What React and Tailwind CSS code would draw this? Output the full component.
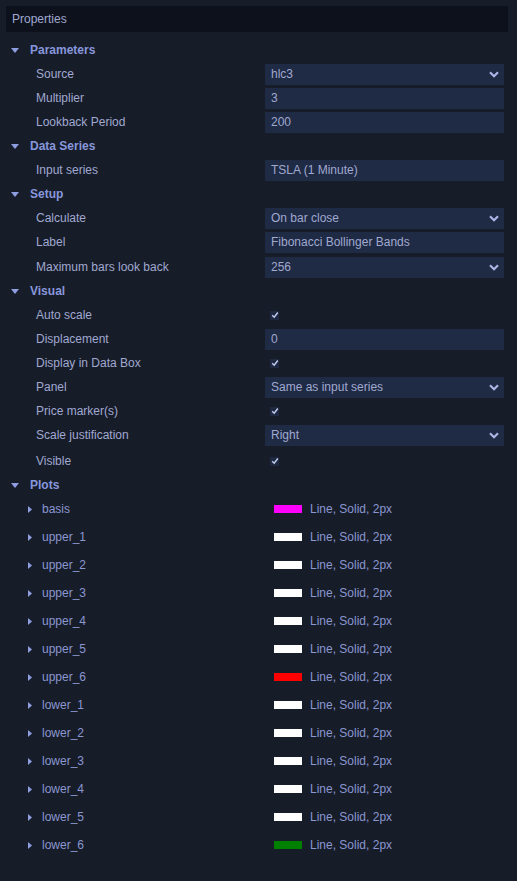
import React from "react";

const Chevron = () => (
  <svg width="10" height="7" viewBox="0 0 10 7" className="shrink-0">
    <path d="M1 1.2 L5 5.2 L9 1.2" fill="none" stroke="#a9b6e6" strokeWidth="2.2" />
  </svg>
);

const Check = () => (
  <div className="ml-[5px] flex h-[9px] w-[9px] items-center justify-center bg-[#1e2840]">
    <svg width="8" height="8" viewBox="0 0 8 8">
      <path d="M1.2 4.2 L3.2 6.2 L6.8 1.5" fill="none" stroke="#c3cdf0" strokeWidth="1.4" />
    </svg>
  </div>
);

const Header = ({ title }) => (
  <div className="flex h-[24px] items-center">
    <svg width="8" height="5" viewBox="0 0 8 5" className="ml-[5px] mr-[11px]">
      <path d="M0 0 L8 0 L4 5 Z" fill="#8e9ee0" />
    </svg>
    <span className="font-bold text-[#8797dc]">{title}</span>
  </div>
);

const Row = ({ label, children, extra = "" }) => (
  <div className={`flex h-[24px] items-center ${extra}`}>
    <div className="w-[259px] pl-[30px] text-[#a0a9d0]">{label}</div>
    <div className="flex w-[239px] items-center">{children}</div>
  </div>
);

const Input = ({ value, select }) => (
  <div className="flex h-[21px] w-full items-center justify-between bg-[#1f2a44] pl-[6px] pr-[5px] text-[#a0a9d0]">
    <span>{value}</span>
    {select && <Chevron />}
  </div>
);

const plots = [
  ["basis", "#ff00ff"],
  ["upper_1", "#ffffff"],
  ["upper_2", "#ffffff"],
  ["upper_3", "#ffffff"],
  ["upper_4", "#ffffff"],
  ["upper_5", "#ffffff"],
  ["upper_6", "#ff0000"],
  ["lower_1", "#ffffff"],
  ["lower_2", "#ffffff"],
  ["lower_3", "#ffffff"],
  ["lower_4", "#ffffff"],
  ["lower_5", "#ffffff"],
  ["lower_6", "#008000"],
];

export default function App() {
  return (
    <div
      className="h-[881px] w-[517px] overflow-hidden bg-[#171c29] px-[6px] pt-[6px] text-[12px] leading-none"
      style={{ fontFamily: '"Liberation Sans", Arial, sans-serif' }}
    >
      <div className="flex h-[26px] w-[502px] items-center bg-[#0c111c] pl-[6px] text-[#a0a9d0]">
        Properties
      </div>
      <div className="mt-[6px]">
        <Header title="Parameters" />
        <Row label="Source"><Input value="hlc3" select /></Row>
        <Row label="Multiplier"><Input value="3" /></Row>
        <Row label="Lookback Period"><Input value="200" /></Row>
        <Header title="Data Series" />
        <Row label="Input series"><Input value="TSLA (1 Minute)" /></Row>
        <Header title="Setup" />
        <Row label="Calculate"><Input value="On bar close" select /></Row>
        <Row label="Label"><Input value="Fibonacci Bollinger Bands" /></Row>
        <Row label="Maximum bars look back" extra="mt-[1px]"><Input value="256" select /></Row>
        <Header title="Visual" />
        <Row label="Auto scale"><Check /></Row>
        <Row label="Displacement"><Input value="0" /></Row>
        <Row label="Display in Data Box"><Check /></Row>
        <Row label="Panel"><Input value="Same as input series" select /></Row>
        <Row label="Price marker(s)"><Check /></Row>
        <Row label="Scale justification"><Input value="Right" select /></Row>
        <Row label="Visible" extra="mt-[2px]"><Check /></Row>
        <Header title="Plots" />
        <div className="-mt-[2px]">
          {plots.map(([name, color]) => (
            <div key={name} className="flex h-[28px] items-center">
              <div className="flex w-[268px] items-center">
                <svg width="4" height="7" viewBox="0 0 4 7" className="ml-[22px] mr-[10px]">
                  <path d="M0 0 L4 3.5 L0 7 Z" fill="#8e9ee0" />
                </svg>
                <span className="text-[#8a97d0]">{name}</span>
              </div>
              <div className="h-[8px] w-[28px]" style={{ backgroundColor: color }} />
              <span className="ml-[8px] text-[#8a97d0]">Line, Solid, 2px</span>
            </div>
          ))}
        </div>
      </div>
    </div>
  );
}
